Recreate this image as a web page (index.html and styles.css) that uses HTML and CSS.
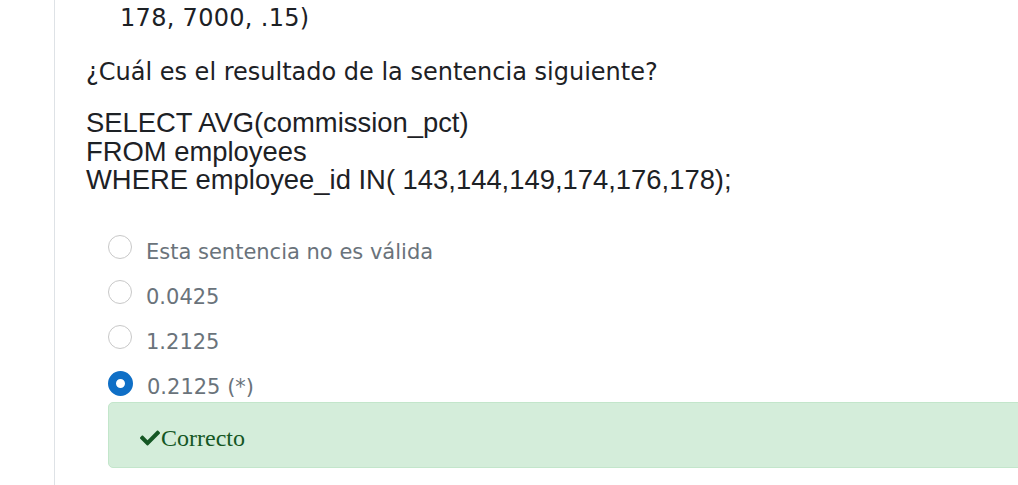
FILE: index.html
```html
<!DOCTYPE html>
<html lang="es">
<head>
<meta charset="utf-8">
<title>Pregunta</title>
<link rel="stylesheet" href="styles.css">
</head>
<body>
<div class="page">
  <div class="main">
    <div class="content">
      <div class="code-prev">
        <div class="code-line">176, 8600, .20)</div>
        <div class="code-line">178, 7000, .15)</div>
      </div>
      <p class="qtext">¿Cuál es el resultado de la sentencia siguiente?</p>
      <div class="sql">
        <div>SELECT AVG(commission_pct)</div>
        <div>FROM employees</div>
        <div>WHERE employee_id IN( 143,144,149,174,176,178);</div>
      </div>
      <div class="answers">
        <div class="opt"><span class="radio"></span><span class="opt-text">Esta sentencia no es válida</span></div>
        <div class="opt"><span class="radio"></span><span class="opt-text">0.0425</span></div>
        <div class="opt"><span class="radio"></span><span class="opt-text">1.2125</span></div>
        <div class="opt"><span class="radio checked"></span><span class="opt-text">0.2125 (*)</span></div>
      </div>
      <div class="feedback">
        <svg class="check" viewBox="0 60 512 392" width="20" height="16" aria-hidden="true"><path fill="#155724" d="M173.898 439.404l-166.4-166.4c-9.997-9.997-9.997-26.206 0-36.204l36.203-36.204c9.997-9.998 26.207-9.998 36.204 0L192 312.69 432.095 72.596c9.997-9.997 26.207-9.997 36.204 0l36.203 36.204c9.997 9.997 9.997 26.206 0 36.204l-294.4 294.401c-9.998 9.997-26.207 9.997-36.204-.001z"/></svg><span class="fb-text">Correcto</span>
      </div>
    </div>
  </div>
</div>
</body>
</html>
```
FILE: styles.css
```css
html, body {
  margin: 0;
  padding: 0;
  background: #ffffff;
}
.page {
  width: 1018px;
  height: 485px;
  overflow: hidden;
}
.main {
  display: flow-root;
  margin-left: 54px;
  border-left: 1px solid #dee2e6;
  padding-left: 31px;
  height: 485px;
  box-sizing: border-box;
}
.content {
  margin-top: -28px;
  margin-right: -20px;
  color: #1d2125;
  font-family: "DejaVu Sans", Verdana, sans-serif;
}
.code-prev {
  padding-left: 34px;
  font-size: 24px;
  line-height: 31px;
  letter-spacing: 0.3px;
}
.qtext {
  margin: 22.5px 0 0 0;
  font-size: 24px;
  line-height: 30px;
}
.sql {
  margin-top: 22.5px;
  font-family: "Liberation Sans", Arial, sans-serif;
  font-size: 27.4px;
  line-height: 28.5px;
}
.answers {
  margin-top: 42px;
  padding-left: 22px;
  display: flex;
  flex-direction: column;
  gap: 15px;
}
.opt {
  display: flex;
  align-items: flex-start;
  gap: 14px;
  height: 30px;
}
.radio {
  width: 24px;
  height: 24px;
  box-sizing: border-box;
  border: 1px solid #c8c8c8;
  border-radius: 50%;
  margin-top: -2px;
  background: #fff;
  flex: none;
}
.radio.checked {
  width: 25px;
  height: 25px;
  border: 8px solid #0f6fc6;
  margin-top: -1px;
}
.opt-text {
  font-size: 21px;
  line-height: 30px;
  color: #6a737b;
}
.feedback {
  margin-left: 22px;
  background: #d4edda;
  border: 1px solid #c3e6cb;
  border-radius: 5px;
  padding: 22px 32px 16px 31px;
  height: 26px;
  display: flex;
  align-items: center;
}
.check {
  flex: none;
  margin-right: 1px;
}
.fb-text {
  font-family: "Liberation Serif", "Times New Roman", serif;
  font-size: 24px;
  line-height: 26px;
  color: #155724;
}
```
